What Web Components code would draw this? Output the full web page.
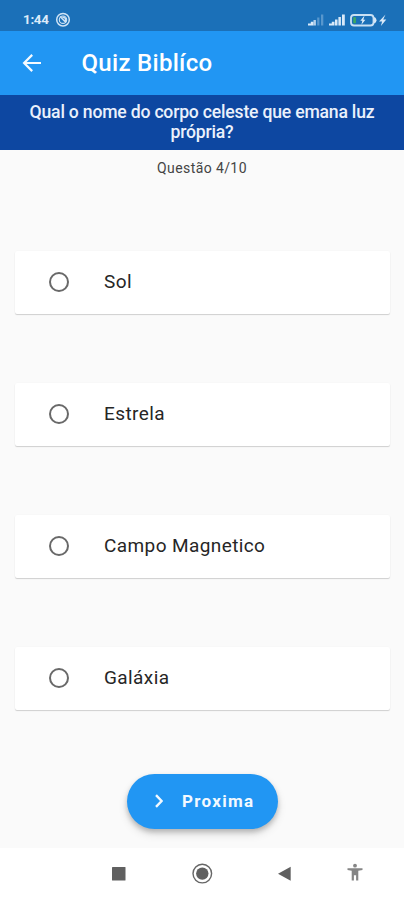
<!DOCTYPE html>
<html lang="pt">
<head>
<meta charset="utf-8">
<title>Quiz Biblíco</title>
<style>
html,body{margin:0;height:100%;background:#fafafa}
body{font-family:Roboto,"Liberation Sans",sans-serif}
</style>
</head>
<body>
<quiz-screen></quiz-screen>
<script>
function define(name, html){
  const t=document.createElement('template');
  t.innerHTML=html;
  customElements.define(name,class extends HTMLElement{
    constructor(){super();this.attachShadow({mode:'open'}).append(t.content.cloneNode(true));}
  });
}
define('status-bar',`<style>
:host{display:flex;box-sizing:border-box;height:31px;padding:9px 17px 0 23px;background:#1b70b8;color:#dcebfa;justify-content:space-between;align-items:flex-start}
.l{display:flex;gap:6px}
span{font-size:13.4px;font-weight:700;line-height:22px;letter-spacing:-.3px}
svg{display:block}
</style>
<div class="l"><span>1:44</span>
<svg width="16" height="22" viewBox="0 0 16 22" fill="none" stroke="#cfe3f5"><circle cx="8" cy="10.700" r="6.300" stroke-width="1.500"/><circle cx="8" cy="10.700" r="3.700" stroke-width="1.100"/><path d="M5 7.500l6 6M7.500 8l3 1.200v3" stroke-width="1.500"/></svg></div>
<svg width="80" height="22" viewBox="307 9 80 22">
<g fill="#d9e9f8"><path d="M308 25.500v-2h2.800v-1.800h2.700v3.800z"/><path d="M313.500 25.500v-5.500h2.400v5.500z" opacity=".8"/><g opacity=".32"><path d="M317.200 25.500v-8h2.200v8zM321 25.500v-11h2.300v11z"/></g>
<path d="M329 25.500v-2h2.800v-1.800h2.700v3.800zM335 25.500v-6h2.500v6zM338.400 25.500v-8.500h2.500v8.500zM342 25.500v-11h2.800v11z"/>
<path d="M374 17.200h1q1.500 1.300 1.500 3t-1.500 3h-1z"/><path d="M385.500 14.500l-6.500 7h3.100l-1.200 4.500 5.400-6.600h-3.100z"/><path d="M364.500 15.500l-4.200 5.200h2l-.9 4 4-5h-2z"/></g>
<rect x="351" y="15" width="22.500" height="10.500" rx="3" fill="none" stroke="#c9e0f4" stroke-width="1.800"/><rect x="353.300" y="17.200" width="2.600" height="6" fill="#3daa62"/></svg>`);
define('app-bar',`<style>
:host{display:flex;height:64px;box-sizing:border-box;background:#2196f3;color:#fff;align-items:center;padding-left:22px;gap:39.5px}
h1{margin:0;font-size:24px;font-weight:500;line-height:30px;white-space:nowrap;letter-spacing:.3px}
svg{display:block}
</style><svg width="20" height="20" viewBox="0 0 20 20" fill="none" stroke="#f4faff" stroke-width="2.200"><path d="M19 10H2.500M10.200 1.900L2.100 10l8.100 8.100"/></svg><h1><slot></slot></h1>`);
define('question-banner',`<style>
:host{display:block;height:55px;box-sizing:border-box;padding:7px 20px 0;background:#0d47a1;color:#eaf1fc;text-align:center;font-size:17.600px;font-weight:500;line-height:20px;letter-spacing:-.2px}
</style><slot></slot>`);
define('question-counter',`<style>
:host{display:block;text-align:center;font-size:14px;line-height:18px;padding-top:9px;color:#444;letter-spacing:.4px}
</style><slot></slot>`);
define('answer-option',`<style>
:host{display:flex;align-items:center;box-sizing:border-box;height:63px;padding:0 0 2px 34px;gap:35px;background:#fff;border-radius:2px;box-shadow:0 1px 1px rgba(0,0,0,.17),0 0 2px rgba(0,0,0,.03);color:#262626;font-size:19px;letter-spacing:.4px;white-space:nowrap}
i{width:20px;height:20px;box-sizing:border-box;border:2px solid #696969;border-radius:50%}
span{position:relative;top:-.5px}
</style><i></i><span><slot></slot></span>`);
define('next-button',`<style>
:host{display:flex;box-sizing:border-box;width:151px;height:55px;align-items:center;padding:0 0 2px 28px;gap:19px;border-radius:28px;background:#2196f3;color:#f2f9ff;box-shadow:0 3px 5px rgba(0,0,0,.2),0 5px 10px rgba(0,0,0,.12);font-size:17px;font-weight:700;letter-spacing:1.300px}
</style><svg width="8" height="14" viewBox="0 0 8 14" fill="none" stroke="#f2f9ff" stroke-width="2.400"><path d="M1 1.200L6.600 7 1 12.800"/></svg><span><slot></slot></span>`);
define('nav-bar',`<style>
:host{display:block;height:52px;background:#fff}svg{display:block}
</style><svg width="404" height="52" viewBox="0 848 404 52"><g fill="#606060"><rect x="112" y="867" width="13.500" height="13.500" rx=".6"/><circle cx="202.300" cy="873.600" r="6.200"/><path d="M278 873.800l12.700-7v14z"/></g><circle cx="202.300" cy="873.600" r="9.300" fill="none" stroke="#666" stroke-width="1.400"/><g fill="#858585"><circle cx="355" cy="865.700" r="1.900"/><path d="M347.500 868.300h15v1.800l-4.200.7v9.700h-2.200v-5.200h-2.200v5.200h-2.200v-9.700l-4.200-.7z"/></g></svg>`);
define('quiz-screen',`<style>
:host{display:flex;flex-direction:column;height:900px;width:404px;background:#fafafa;overflow:hidden}
.answers{display:grid;gap:69px;padding:0 14px 0 15px;margin-top:74px}
next-button{margin:64px 0 0 127px}
nav-bar{margin-top:auto}
</style>
<status-bar></status-bar><app-bar>Quiz Biblíco</app-bar>
<question-banner>Qual o nome do corpo celeste que emana luz própria?</question-banner>
<question-counter>Questão 4/10</question-counter>
<div class="answers"><answer-option>Sol</answer-option><answer-option>Estrela</answer-option><answer-option>Campo Magnetico</answer-option><answer-option>Galáxia</answer-option></div>
<next-button>Proxima</next-button><nav-bar></nav-bar>`);
</script>
</body>
</html>
